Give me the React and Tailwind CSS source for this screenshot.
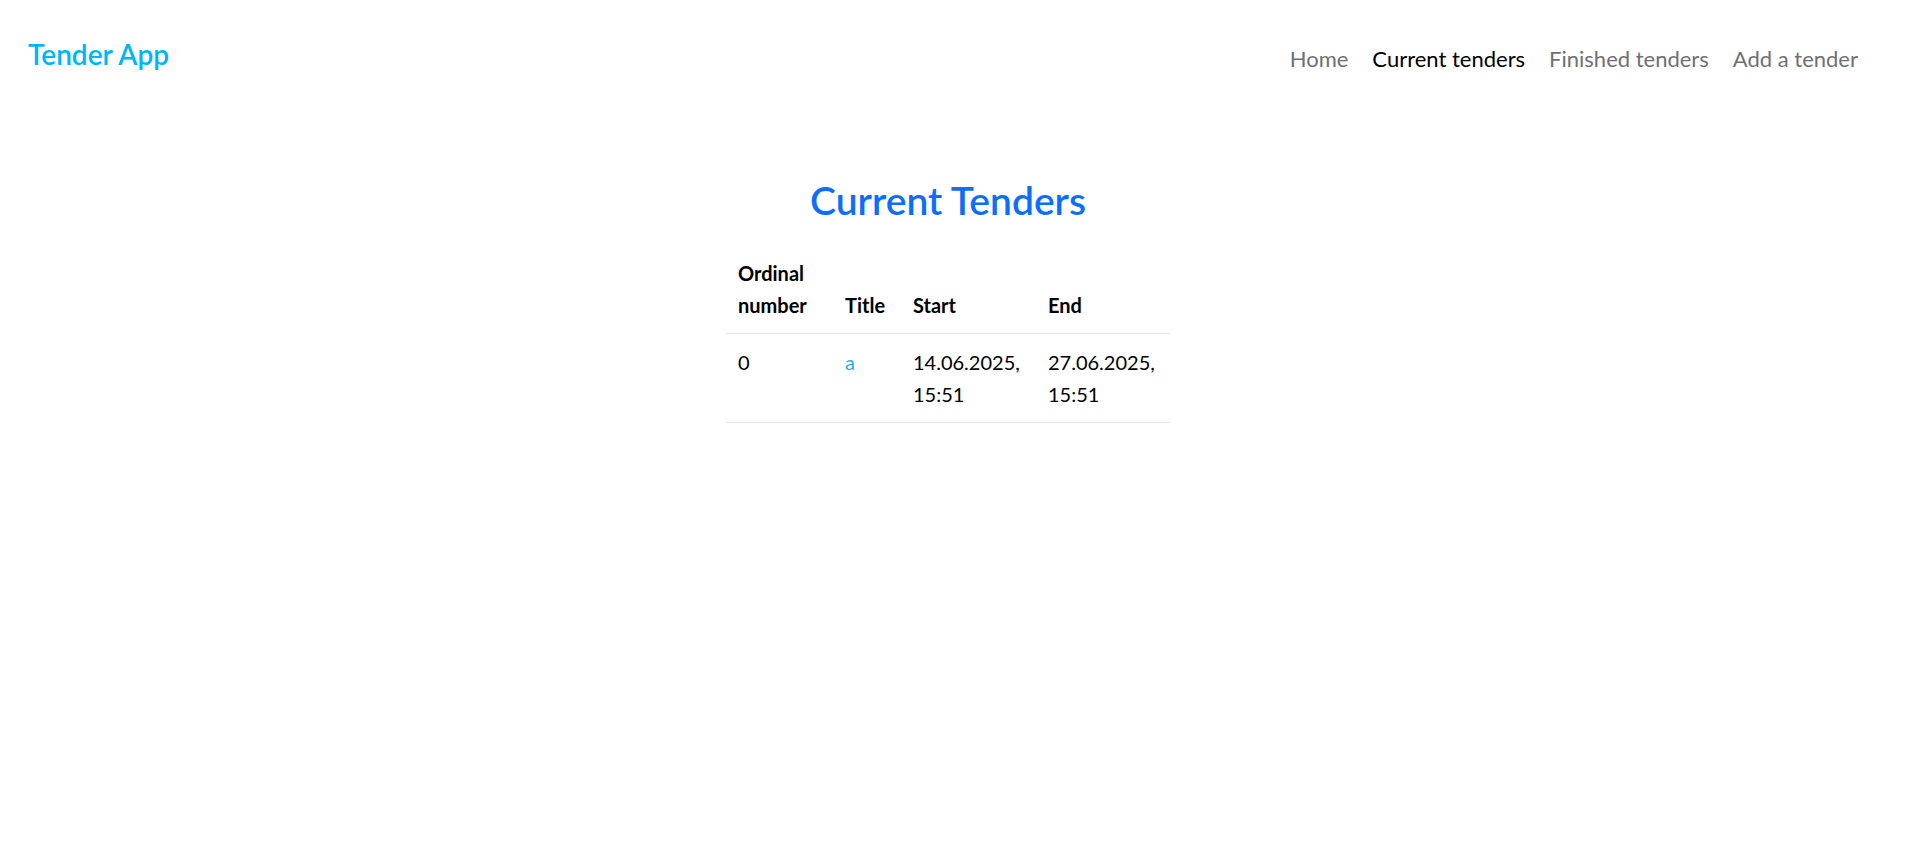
const tenders = [
  { id: 0, title: 'a', start: '14.06.2025, 15:51', end: '27.06.2025, 15:51' },
];

function NavItem({ active, children }) {
  return (
    <a
      href="#"
      className={`px-[12px] text-[22px] leading-[33px] ${
        active ? 'text-black' : 'text-[#6f6f74]'
      }`}
    >
      {children}
    </a>
  );
}

export default function App() {
  return (
    <div className="min-h-screen bg-white text-black font-['Lato','Noto_Sans',sans-serif]">
      <header className="flex items-start justify-between pl-[28px] pr-[37px]">
        <a href="#" className="mt-[33px] text-[28px] leading-[42px] font-semibold text-[#00b4fb]">
          Tender App
        </a>
        <nav className="mt-[42px] flex">
          <NavItem>Home</NavItem>
          <NavItem active>Current tenders</NavItem>
          <NavItem>Finished tenders</NavItem>
          <NavItem>Add a tender</NavItem>
        </nav>
      </header>

      <main className="flex flex-col items-center pr-[11px] pt-[102px]">
        <h2 className="text-[39px] leading-[1.2] font-semibold text-[#0d6efd] mb-[21px]">
          Current Tenders
        </h2>
        <table className="table-fixed w-[444px] border-collapse text-[20px] leading-[32px]">
          <colgroup>
            <col className="w-[107px]" />
            <col className="w-[68px]" />
            <col className="w-[135px]" />
            <col className="w-[134px]" />
          </colgroup>
          <thead>
            <tr className="border-b border-[#dee2e6] align-bottom text-left">
              <th className="p-[12px] font-bold">Ordinal number</th>
              <th className="p-[12px] font-bold">Title</th>
              <th className="p-[12px] font-bold">Start</th>
              <th className="p-[12px] font-bold">End</th>
            </tr>
          </thead>
          <tbody>
            {tenders.map((t) => (
              <tr key={t.id} className="border-b border-[#dee2e6] align-top">
                <td className="p-[12px]">{t.id}</td>
                <td className="p-[12px]">
                  <a href="#" className="text-[#1cb0f6]">{t.title}</a>
                </td>
                <td className="p-[12px]">{t.start}</td>
                <td className="p-[12px]">{t.end}</td>
              </tr>
            ))}
          </tbody>
        </table>
      </main>
    </div>
  );
}
